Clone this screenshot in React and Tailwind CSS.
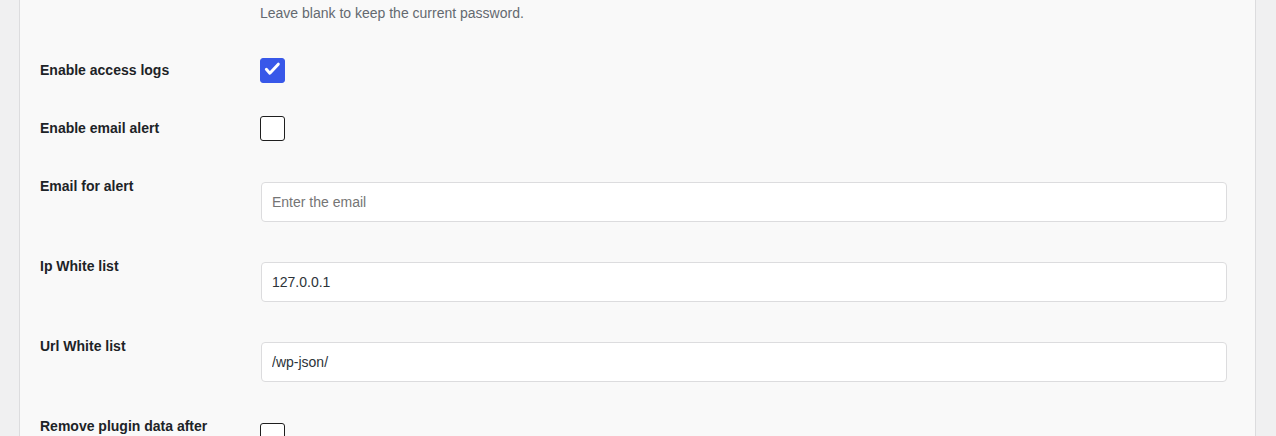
import { useState } from "react";

const FIELDS = [
  { key: "logs", label: "Enable access logs", type: "checkbox", checked: true },
  { key: "alert", label: "Enable email alert", type: "checkbox", checked: false },
  { key: "email", label: "Email for alert", type: "text", placeholder: "Enter the email", value: "" },
  { key: "ip", label: "Ip White list", type: "text", value: "127.0.0.1" },
  { key: "url", label: "Url White list", type: "text", value: "/wp-json/" },
  { key: "remove", label: "Remove plugin data after uninstall", type: "checkbox", checked: false },
];

function Checkbox({ checked, onChange }) {
  return (
    <button
      type="button"
      onClick={onChange}
      className={
        "w-[25px] h-[25px] rounded-[3px] border flex items-center justify-center " +
        (checked ? "bg-[#3858e9] border-[#3858e9]" : "bg-white border-[#1e1e1e]")
      }
    >
      {checked && (
        <svg width="25" height="25" viewBox="0 0 25 25" fill="none">
          <path d="M5.8 11.2l3.8 4.2L18.8 5.6" stroke="white" strokeWidth="3.2" strokeLinecap="round" strokeLinejoin="round" />
        </svg>
      )}
    </button>
  );
}

export default function App() {
  const [vals, setVals] = useState(() => Object.fromEntries(FIELDS.map(f => [f.key, f.type === "checkbox" ? f.checked : f.value])));

  return (
    <div className="min-h-screen bg-[#f0f0f1] pl-[19px] pr-[20px] font-['Liberation_Sans',Arial,sans-serif] text-[14px] text-[#1d2327]">
      <div className="min-h-[436px] bg-[#f9f9f9] border-x border-[#dcdcde] px-5">
        {/* tail of the password row */}
        <div className="flex">
          <div className="w-[210px] shrink-0" />
          <div className="flex-1 px-2.5 pt-[3px] pb-[17px]">
            <p className="leading-[21px] text-[#646970]">Leave blank to keep the current password.</p>
          </div>
        </div>

        {FIELDS.map(f => (
          <div key={f.key} className="flex">
            <div className="w-[210px] shrink-0 py-5 pr-2.5 font-bold leading-[1.3]">{f.label}</div>
            {f.type === "checkbox" ? (
              <div className="flex-1 px-2.5 py-[15px] flex items-center">
                <Checkbox checked={vals[f.key]} onChange={() => setVals(v => ({ ...v, [f.key]: !v[f.key] }))} />
              </div>
            ) : (
              <div className="flex-1 px-2.5 py-[15px]">
                <input
                  type="text"
                  value={vals[f.key]}
                  placeholder={f.placeholder}
                  onChange={e => setVals(v => ({ ...v, [f.key]: e.target.value }))}
                  className="mt-2.5 ml-px w-[966px] h-10 rounded-[4px] border border-[#dcdcde] bg-white px-2.5 text-[14px] text-[#2c3338] placeholder:text-[#757575] outline-none focus:border-[#3858e9]"
                />
              </div>
            )}
          </div>
        ))}
      </div>
    </div>
  );
}
